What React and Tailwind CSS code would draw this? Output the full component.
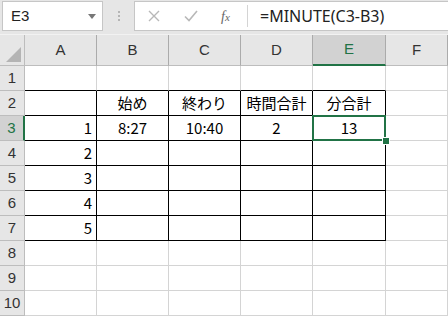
import React from 'react';

const cols = ['A', 'B', 'C', 'D', 'E', 'F'];

const data = {
  2: { B: '始め', C: '終わり', D: '時間合計', E: '分合計' },
  3: { A: '1', B: '8:27', C: '10:40', D: '2', E: '13' },
  4: { A: '2' },
  5: { A: '3' },
  6: { A: '4' },
  7: { A: '5' },
};

function Cell({ r, c }) {
  const inTable = r >= 2 && r <= 7 && c !== 'F';
  const aboveTable = r === 1 && c !== 'F';
  const right = inTable ? 'border-r-black' : 'border-r-[#d4d4d4]';
  const bottom = inTable || aboveTable ? 'border-b-black' : 'border-b-[#d4d4d4]';
  const text = (data[r] && data[r][c]) || '';
  const align = c === 'A' ? 'justify-end pr-[4px]' : 'justify-center';
  const selected = r === 3 && c === 'E';
  return (
    <div className={`relative h-[25px] border-r border-b ${right} ${bottom} flex items-center ${align} text-[15px] text-black ${selected ? 'z-10' : ''}`}>
      {text}
      {selected && (
        <>
          <div className="absolute left-[-1px] top-[-1px] w-[74px] h-[26px] border-2 border-[#217346]" />
          <div className="absolute right-[-5px] bottom-[-5px] w-[8px] h-[8px] bg-[#217346] border border-white" />
        </>
      )}
    </div>
  );
}

export default function App() {
  const rows = [1, 2, 3, 4, 5, 6, 7, 8, 9, 10];
  return (
    <div className="w-[448px] h-[317px] overflow-hidden bg-white" style={{ fontFamily: '"Noto Sans CJK JP", "Noto Sans", sans-serif' }}>
      {/* Formula bar */}
      <div className="h-[35px] bg-[#e6e6e6] flex items-start pt-[1px] pl-[2px] border-b border-[#f2f2f2]">
        <div className="w-[101px] h-[30px] bg-white border border-[#c6c6c6] flex items-center justify-between pl-[8px] pr-[6px]">
          <span className="text-[15px] text-[#222]" style={{ fontFamily: '"Liberation Sans", sans-serif' }}>E3</span>
          <svg width="8" height="5" viewBox="0 0 8 5"><path d="M0 0h8L4 5z" fill="#777" /></svg>
        </div>
        <div className="w-[31px] h-[30px] flex flex-col items-center justify-center gap-[2px]">
          <div className="w-[2px] h-[2px] bg-[#b5b5b5]" />
          <div className="w-[2px] h-[2px] bg-[#b5b5b5]" />
          <div className="w-[2px] h-[2px] bg-[#b5b5b5]" />
        </div>
        <div className="flex-1 h-[30px] bg-white border border-[#c6c6c6] border-r-0 flex items-center">
          <div className="w-[112px] h-full flex items-center">
            <svg className="ml-[13px]" width="12" height="12" viewBox="0 0 12 12"><path d="M1 1l10 10M11 1L1 11" stroke="#b8b8b8" strokeWidth="1.4" /></svg>
            <svg className="ml-[24px]" width="14" height="12" viewBox="0 0 14 12"><path d="M1 6.5l4 4L13 1" stroke="#b8b8b8" strokeWidth="1.6" fill="none" /></svg>
            <span className="ml-[23px] text-[14px] italic text-[#666]" style={{ fontFamily: '"Liberation Serif", serif' }}>f<span className="text-[11px]">x</span></span>
          </div>
          <div className="w-px h-[22px] bg-[#d4d4d4]" />
          <span className="ml-[12px] text-[16px] text-[#222]" style={{ fontFamily: '"Noto Sans", sans-serif' }}>=MINUTE(C3-B3)</span>
        </div>
      </div>

      {/* Grid */}
      <div className="grid grid-cols-[25px_72px_72px_72px_72px_73px_1fr]">
        <div className="h-[31px] bg-[#e6e6e6] border-r border-b border-[#bdbdbd] relative">
          <svg className="absolute right-[3px] bottom-[3px]" width="15" height="15" viewBox="0 0 15 15"><path d="M15 0V15H0z" fill="#b4b4b4" /></svg>
        </div>
        {cols.map((c) => (
          <div
            key={c}
            className={`h-[31px] flex items-center justify-center text-[15px] ${
              c === 'E'
                ? 'bg-[#d2d2d2] text-[#217346] border-b-2 border-b-[#217346] border-r border-r-[#ababab]'
                : 'bg-[#e6e6e6] text-[#333] border-b border-b-[#bdbdbd] border-r border-r-[#ababab]'
            }`}
            style={{ fontFamily: '"Liberation Sans", sans-serif' }}
          >
            {c}
          </div>
        ))}
        {rows.map((r) => (
          <React.Fragment key={r}>
            <div
              className={`h-[25px] flex items-center justify-center text-[15px] border-b border-b-[#bdbdbd] ${
                r === 3
                  ? 'bg-[#d2d2d2] text-[#217346] border-r-2 border-r-[#217346]'
                  : 'bg-[#e6e6e6] text-[#333] border-r border-r-[#bdbdbd]'
              }`}
              style={{ fontFamily: '"Liberation Sans", sans-serif' }}
            >
              {r}
            </div>
            {cols.map((c) => (
              <Cell key={c} r={r} c={c} />
            ))}
          </React.Fragment>
        ))}
      </div>
    </div>
  );
}
